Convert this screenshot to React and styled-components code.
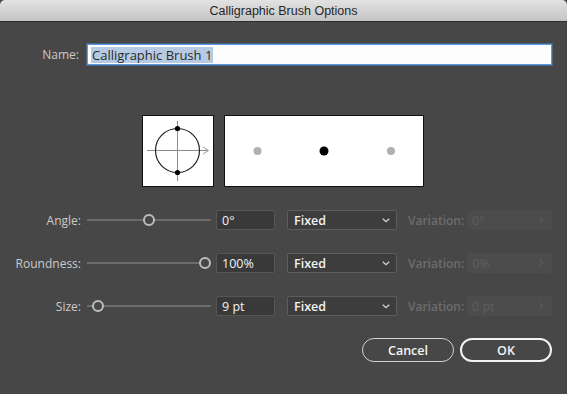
import React from 'react';
import styled, { createGlobalStyle } from 'styled-components';

const GlobalStyle = createGlobalStyle`
  html, body {
    margin: 0;
    padding: 0;
    background: #474747;
  }
  * { box-sizing: border-box; }
`;

const Window = styled.div`
  width: 567px;
  height: 394px;
  background: #474747;
  font-family: 'Open Sans', 'Lato', sans-serif;
  display: flex;
  flex-direction: column;
  overflow: hidden;
`;

const TitleBar = styled.div`
  height: 22px;
  flex: none;
  background: linear-gradient(#e2e2e2, #c4c4c4);
  border-bottom: 1px solid #2e2e2e;
  border-radius: 5px 5px 0 0;
  display: flex;
  align-items: center;
  justify-content: center;
  font-size: 12.5px;
  color: #262626;
  font-family: 'Liberation Sans', 'Open Sans', sans-serif;
`;

const Body = styled.div`
  flex: 1;
  display: flex;
  flex-direction: column;
  padding: 22px 15px 0 0;
`;

const Row = styled.div`
  display: flex;
  align-items: center;
  height: ${p => p.h || 20}px;
  margin-bottom: ${p => p.mb || 0}px;
`;

const Label = styled.div`
  width: 83px;
  flex: none;
  text-align: right;
  font-size: 12px;
  color: #cacaca;
  padding-right: ${p => (p.pr != null ? p.pr : 2)}px;
`;

const NameField = styled.div`
  flex: 1;
  height: 21px;
  margin-left: 4px;
  background: #fdfdfd;
  border: 1px solid #5a9be9;
  box-shadow: 0 0 0 1px rgba(90, 155, 233, 0.35);
  display: flex;
  align-items: center;
  padding-left: 3px;
`;

const Selected = styled.span`
  background: #b6cbe3;
  color: #2a2a2a;
  font-size: 13px;
  line-height: 16px;
  padding: 0 1px;
`;

const Preview = styled.div`
  display: flex;
  gap: 10px;
  padding-left: 142px;
  margin: 50px 0 23px;
`;

const Box = styled.div`
  width: ${p => p.w}px;
  height: 72px;
  background: #ffffff;
  border: 1px solid #111;
  display: flex;
`;

const SliderWrap = styled.div`
  position: relative;
  width: 124px;
  height: 20px;
  margin-left: 4px;
  flex: none;
`;

const Track = styled.div`
  position: absolute;
  left: 0;
  right: 0;
  top: 9px;
  height: 2px;
  background: #6c6c6c;
`;

const Thumb = styled.div`
  position: absolute;
  top: 4px;
  width: 12px;
  height: 12px;
  margin-left: -6px;
  border-radius: 50%;
  border: 2px solid #bdbdbd;
  background: #474747;
`;

const NumInput = styled.div`
  width: 59px;
  height: 20px;
  margin-left: 5px;
  flex: none;
  background: #393939;
  border: 1px solid #565656;
  border-radius: 2px;
  color: #f2f2f2;
  font-size: 12.5px;
  display: flex;
  align-items: center;
  padding-left: 5px;
`;

const Select = styled.div`
  width: 110px;
  height: 20px;
  margin-left: 12px;
  flex: none;
  background: #3d3d3d;
  border: 1px solid #5d5d5d;
  border-radius: 2px;
  color: #f2f2f2;
  font-size: 12.5px;
  font-weight: 600;
  display: flex;
  align-items: center;
  justify-content: space-between;
  padding: 0 6px 0 6px;
`;

const VarLabel = styled.div`
  margin-left: 11px;
  width: 56px;
  flex: none;
  color: #6d6d6d;
  font-size: 12px;
  font-weight: 600;
`;

const VarBox = styled.div`
  width: 85px;
  height: 20px;
  margin-left: 3px;
  flex: none;
  background: #4c4c4c;
  border-radius: 2px;
  color: #5e5e5e;
  font-size: 12.5px;
  display: flex;
  align-items: center;
  justify-content: space-between;
  padding: 0 8px 0 5px;
`;

const Buttons = styled.div`
  display: flex;
  justify-content: flex-end;
  gap: 6px;
  margin-top: 22px;
`;

const Button = styled.div`
  width: ${p => p.w}px;
  height: 24px;
  border-radius: 12px;
  border: ${p => (p.primary ? '2px solid #f2f2f2' : '1px solid #d2d2d2')};
  color: #f4f4f4;
  font-size: 12.5px;
  font-weight: 600;
  display: flex;
  align-items: center;
  justify-content: center;
`;

const ChevronDown = () => (
  <svg width="8" height="5" viewBox="0 0 8 5">
    <path d="M0.8 0.8 L4 3.8 L7.2 0.8" fill="none" stroke="#d8d8d8" strokeWidth="1.2" />
  </svg>
);

const ChevronRight = () => (
  <svg width="5" height="8" viewBox="0 0 5 8">
    <path d="M0.8 0.8 L3.8 4 L0.8 7.2" fill="none" stroke="#5c5c5c" strokeWidth="1.1" />
  </svg>
);

const params = [
  { label: 'Angle', pos: 0.5, value: '0°', vary: '0°' },
  { label: 'Roundness', pos: 0.955, value: '100%', vary: '0%' },
  { label: 'Size', pos: 0.085, value: '9 pt', vary: '0 pt' },
];

function ParamRow({ label, pos, value, vary, last }) {
  return (
    <Row h={20} mb={last ? 0 : 23}>
      <Label>{label}:</Label>
      <SliderWrap>
        <Track />
        <Thumb style={{ left: `${pos * 100}%` }} />
      </SliderWrap>
      <NumInput>{value}</NumInput>
      <Select>
        <span>Fixed</span>
        <ChevronDown />
      </Select>
      <VarLabel>Variation:</VarLabel>
      <VarBox>
        <span>{vary}</span>
        <ChevronRight />
      </VarBox>
    </Row>
  );
}

export default function App() {
  return (
    <Window>
      <GlobalStyle />
      <TitleBar>Calligraphic Brush Options</TitleBar>
      <Body>
        <Row h={21}>
          <Label pr={4}>Name:</Label>
          <NameField>
            <Selected>Calligraphic Brush 1</Selected>
          </NameField>
        </Row>
        <Preview>
          <Box w={72}>
            <svg width="70" height="70" viewBox="0 0 70 70">
              <line x1="4" y1="34.5" x2="65" y2="34.5" stroke="#8a8a8a" strokeWidth="1" />
              <path d="M60 31 L65.5 34.5 L60 38" fill="none" stroke="#9a9a9a" strokeWidth="1" />
              <line x1="34.5" y1="5" x2="34.5" y2="65" stroke="#8a8a8a" strokeWidth="1" />
              <circle cx="34.5" cy="34.5" r="22" fill="none" stroke="#222" strokeWidth="1.2" />
              <circle cx="34.5" cy="12.5" r="2.6" fill="#000" />
              <circle cx="34.5" cy="56.5" r="2.6" fill="#000" />
            </svg>
          </Box>
          <Box w={200}>
            <svg width="198" height="70" viewBox="0 0 198 70">
              <circle cx="32.5" cy="35" r="4" fill="#b0b0b0" />
              <circle cx="99" cy="35" r="4.5" fill="#000" />
              <circle cx="166" cy="35" r="4" fill="#b0b0b0" />
            </svg>
          </Box>
        </Preview>
        {params.map((p, i) => (
          <ParamRow key={p.label} {...p} last={i === params.length - 1} />
        ))}
        <Buttons>
          <Button w={92}>Cancel</Button>
          <Button w={92} primary>OK</Button>
        </Buttons>
      </Body>
    </Window>
  );
}
